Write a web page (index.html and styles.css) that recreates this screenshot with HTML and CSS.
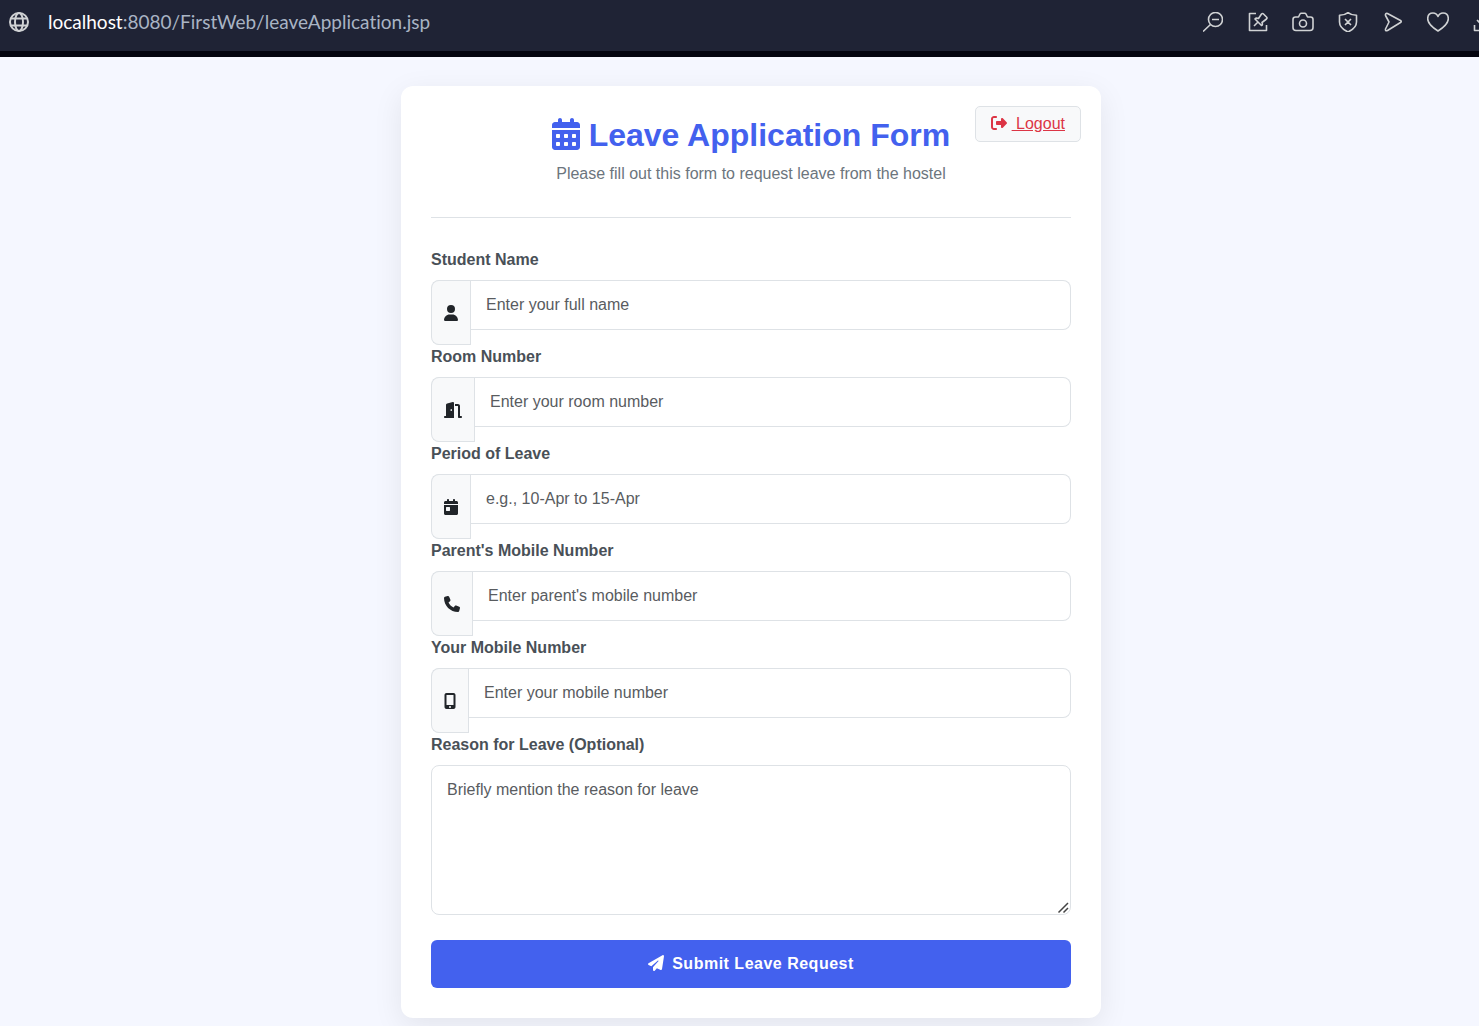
FILE: index.html
```html
<!DOCTYPE html>
<html lang="en">
<head>
<meta charset="utf-8">
<meta name="viewport" content="width=device-width, initial-scale=1">
<title>Leave Application Form</title>
<link rel="stylesheet" href="styles.css">
</head>
<body>
<header class="browser-bar">
  <svg class="tool-icon globe" viewBox="0 0 20 20" aria-hidden="true"><circle cx="10" cy="10" r="9"/><ellipse cx="10" cy="10" rx="4" ry="9"/><path d="M2 6.500h16M2 13.500h16"/></svg>
  <div class="address"><span class="address-host">localhost</span>:8080/FirstWeb/leaveApplication.jsp</div>
  <div class="tools">
    <button class="tool" type="button" aria-label="Zoom out"><svg class="tool-icon" viewBox="0 0 20 20"><circle cx="12.500" cy="7.500" r="7"/><path d="M9 7.500h7M7.500 12.500L0 19.500"/></svg></button>
    <button class="tool" type="button" aria-label="Pin"><svg class="tool-icon" viewBox="0 0 20 20"><path d="M8 1.500H1.500v17h17V13M6 14l4-4M7 7l6.500 6.500q1.500-.5.500-3l4.500-3.500q1-1 0-2l-3-3q-1-1-2 0L10.500 6.500Q8 5.500 7 7z"/></svg></button>
    <button class="tool" type="button" aria-label="Snapshot"><svg class="tool-icon wide" viewBox="0 0 22 20"><path d="M3.500 5h3l1.500-3q.4-.8 1.300-.8h3.400q.9 0 1.300.8l1.500 3h3q2.500 0 2.500 2.500v8q0 3-3 3H4q-3 0-3-3v-8Q1 5 3.500 5z"/><circle cx="11" cy="11.500" r="3.500"/></svg></button>
    <button class="tool" type="button" aria-label="Ad blocker"><svg class="tool-icon" viewBox="0 0 20 20"><path d="M10 .6Q13.500 3.300 18.500 3.300V10q0 6-8.500 10Q1.500 16 1.500 10V3.300Q6.500 3.300 10 .6zM7 7l6 6M13 7l-6 6"/></svg></button>
    <button class="tool" type="button" aria-label="Send"><svg class="tool-icon" viewBox="0 0 20 20"><path d="M4.500 1.500l13 7q1.500 1 0 2l-13 8q-2.500.8-2-1.500L6 10 2.500 3.500Q2 1 4.500 1.500z"/></svg></button>
    <button class="tool" type="button" aria-label="Favourite"><svg class="tool-icon wide" viewBox="0 0 22 20"><path d="M11 19Q.7 12.500.7 6.800.7 1 6 1q3.500 0 5 3.500Q12.500 1 16 1q5.300 0 5.300 5.800Q21.300 12.500 11 19z"/></svg></button>
    <button class="tool" type="button" aria-label="Downloads"><svg class="tool-icon" viewBox="0 0 20 20"><path d="M1.500 13v5.500h17V13M10 1v12M4 8l6 6 6-6"/></svg></button>
  </div>
</header>

<main class="page">
  <section class="card">
    <a class="logout" href="#logout"><svg class="fa logout-icon" viewBox="0 0 512 512" aria-hidden="true"><path d="M377.900 105.900L500.700 228.700c7.200 7.200 11.300 17.100 11.300 27.300s-4.100 20.100-11.300 27.300L377.900 406.100c-6.400 6.400-15 9.900-24 9.900c-18.700 0-33.900-15.200-33.900-33.900l0-62.100-128 0c-17.700 0-32-14.300-32-32l0-64c0-17.700 14.300-32 32-32l128 0 0-62.100c0-18.700 15.200-33.900 33.900-33.900c9 0 17.600 3.600 24 9.900zM160 96L96 96c-17.700 0-32 14.300-32 32l0 256c0 17.700 14.300 32 32 32l64 0c17.700 0 32 14.300 32 32s-14.300 32-32 32l-64 0c-53 0-96-43-96-96L0 128C0 75 43 32 96 32l64 0c17.700 0 32 14.300 32 32s-14.300 32-32 32z"/></svg> Logout</a>

    <div class="form-header">
      <h1 class="title"><svg class="fa" viewBox="0 0 448 512" aria-hidden="true"><path d="M128 0c17.700 0 32 14.300 32 32V64H288V32c0-17.700 14.300-32 32-32s32 14.300 32 32V64h48c26.500 0 48 21.500 48 48v48H0V112C0 85.500 21.500 64 48 64H96V32c0-17.700 14.300-32 32-32zM0 192H448V464c0 26.500-21.500 48-48 48H48c-26.500 0-48-21.500-48-48V192zm64 80v32c0 8.800 7.200 16 16 16h32c8.800 0 16-7.200 16-16V272c0-8.800-7.200-16-16-16H80c-8.800 0-16 7.200-16 16zm128 0v32c0 8.800 7.200 16 16 16h32c8.800 0 16-7.200 16-16V272c0-8.800-7.200-16-16-16H208c-8.800 0-16 7.200-16 16zm144-16c-8.800 0-16 7.200-16 16v32c0 8.800 7.200 16 16 16h32c8.800 0 16-7.200 16-16V272c0-8.800-7.200-16-16-16H336zM64 400v32c0 8.800 7.200 16 16 16h32c8.800 0 16-7.200 16-16V400c0-8.800-7.200-16-16-16H80c-8.800 0-16 7.200-16 16zm144-16c-8.800 0-16 7.200-16 16v32c0 8.800 7.200 16 16 16h32c8.800 0 16-7.200 16-16V400c0-8.800-7.200-16-16-16H208zm112 16v32c0 8.800 7.200 16 16 16h32c8.800 0 16-7.200 16-16V400c0-8.800-7.200-16-16-16H336c-8.800 0-16 7.200-16 16z"/></svg> Leave Application Form</h1>
      <p class="subtitle">Please fill out this form to request leave from the hostel</p>
    </div>

    <form>
      <label class="label" for="studentName">Student Name</label>
      <div class="input-group">
        <span class="addon"><svg class="fa" viewBox="0 0 448 512" aria-hidden="true"><path d="M224 256A128 128 0 1 0 224 0a128 128 0 1 0 0 256zm-45.700 48C79.800 304 0 383.800 0 482.300C0 498.700 13.300 512 29.700 512H418.300c16.400 0 29.700-13.300 29.700-29.700C448 383.800 368.200 304 269.700 304H178.300z"/></svg></span>
        <input class="control" type="text" id="studentName" placeholder="Enter your full name">
      </div>

      <label class="label" for="roomNumber">Room Number</label>
      <div class="input-group">
        <span class="addon"><svg class="fa" viewBox="0 0 576 512" aria-hidden="true"><path d="M320 32c0-9.900-4.500-19.200-12.300-25.200S289.800-1.400 280.200 1l-179.900 45C79 51.300 64 70.500 64 92.500V448H32c-17.700 0-32 14.300-32 32s14.300 32 32 32H96 288h32V480 32zM256 256c0 17.700-10.700 32-24 32s-24-14.300-24-32s10.700-32 24-32s24 14.300 24 32zm96-128h96V480c0 17.700 14.300 32 32 32h64c17.700 0 32-14.300 32-32s-14.300-32-32-32H512V128c0-35.300-28.700-64-64-64H352v64z"/></svg></span>
        <input class="control" type="text" id="roomNumber" placeholder="Enter your room number">
      </div>

      <label class="label" for="period">Period of Leave</label>
      <div class="input-group">
        <span class="addon"><svg class="fa" viewBox="0 0 448 512" aria-hidden="true"><path d="M128 0c17.700 0 32 14.300 32 32V64H288V32c0-17.700 14.300-32 32-32s32 14.300 32 32V64h48c26.500 0 48 21.500 48 48v48H0V112C0 85.500 21.500 64 48 64H96V32c0-17.700 14.300-32 32-32zM0 192H448V464c0 26.500-21.500 48-48 48H48c-26.500 0-48-21.500-48-48V192zm80 64c-8.800 0-16 7.200-16 16v96c0 8.800 7.200 16 16 16h96c8.800 0 16-7.200 16-16V272c0-8.800-7.200-16-16-16H80z"/></svg></span>
        <input class="control" type="text" id="period" placeholder="e.g., 10-Apr to 15-Apr">
      </div>

      <label class="label" for="parentMobile">Parent's Mobile Number</label>
      <div class="input-group">
        <span class="addon"><svg class="fa" viewBox="0 0 512 512" aria-hidden="true"><path d="M164.900 24.600c-7.700-18.600-28-28.500-47.400-23.200l-88 24C12.100 30.200 0 46 0 64C0 311.400 200.600 512 448 512c18 0 33.800-12.100 38.600-29.500l24-88c5.300-19.400-4.600-39.700-23.200-47.400l-96-40c-16.300-6.800-35.200-2.100-46.300 11.600L304.700 368C234.300 334.700 177.300 277.700 144 207.300L193.300 167c13.700-11.200 18.400-30 11.600-46.300l-40-96z"/></svg></span>
        <input class="control" type="tel" id="parentMobile" placeholder="Enter parent's mobile number">
      </div>

      <label class="label" for="mobile">Your Mobile Number</label>
      <div class="input-group">
        <span class="addon"><svg class="fa" viewBox="0 0 384 512" aria-hidden="true"><path d="M16 64C16 28.700 44.700 0 80 0H304c35.300 0 64 28.700 64 64V448c0 35.300-28.700 64-64 64H80c-35.300 0-64-28.700-64-64V64zM224 448a32 32 0 1 0 -64 0 32 32 0 1 0 64 0zM304 64H80V384H304V64z"/></svg></span>
        <input class="control" type="tel" id="mobile" placeholder="Enter your mobile number">
      </div>

      <label class="label" for="reason">Reason for Leave (Optional)</label>
      <textarea class="control reason" id="reason" rows="5" placeholder="Briefly mention the reason for leave"></textarea>

      <button class="submit" type="submit"><svg class="fa" viewBox="0 0 512 512" aria-hidden="true"><path d="M498.100 5.600c10.100 7 15.400 19.100 13.500 31.200l-64 416c-1.500 9.700-7.400 18.200-16 23s-18.900 5.400-28 1.600L284 427.700l-68.500 74.100c-8.900 9.700-22.900 12.900-35.200 8.100S160 493.200 160 480V396.400c0-4 1.500-7.800 4.200-10.700L331.800 202.800c5.800-6.300 5.600-16-.4-22s-15.700-6.400-22-.7L106 360.800 17.700 316.600C7.100 311.300 .3 300.700 0 288.900s5.900-22.800 16.100-28.700l448-256c10.700-6.100 23.900-5.500 34 1.400z"/></svg>Submit Leave Request</button>
    </form>
  </section>
</main>
</body>
</html>
```

FILE: styles.css
```css
*, *::before, *::after { box-sizing: border-box; }

body {
  margin: 0;
  background: #f5f7ff;
  color: #212529;
  font-family: "Liberation Sans", Arial, sans-serif;
  font-size: 16px;
  line-height: 24px;
}

/* Browser bar */
.browser-bar {
  display: flex;
  align-items: center;
  height: 57px;
  padding: 0 0 8px 9px;
  overflow: hidden;
  background: #1f2335;
  border-bottom: 6px solid #03040f;
}

.tool-icon {
  display: block;
  flex: none;
  width: 20px;
  height: 20px;
  fill: none;
  stroke: #d0d2d4;
  stroke-width: 1.6;
  stroke-linejoin: round;
}

.tool-icon.wide { width: 22px; }
.tool-icon.globe { stroke-width: 2; }

.address {
  margin-left: 19px;
  color: #a9b4c4;
  font-family: "Segoe UI", Lato, sans-serif;
  font-size: 19px;
  font-variant-ligatures: none;
  white-space: nowrap;
}

.address-host { color: #fff; }

.tools {
  display: flex;
  gap: 21px;
  margin: 0 -16px 0 auto;
}

.tool {
  display: grid;
  place-items: center;
  width: 24px;
  height: 24px;
  padding: 0;
  border: 0;
  background: none;
}

/* Page; the form is centred a little right of the window's middle */
.page { padding: 29px 0 8px 23px; }

.card {
  position: relative;
  max-width: 700px;
  margin: 0 auto;
  padding: 30px;
  background: #fff;
  border-radius: 12px;
  box-shadow: 0 8px 30px rgba(0, 0, 0, 0.08);
}

.fa {
  height: 1em;
  fill: currentColor;
  overflow: visible;
  vertical-align: -2px;
}

.logout {
  position: absolute;
  top: 20px;
  right: 20px;
  padding: 5px 15px;
  color: #dc3545;
  background: #f8f9fa;
  border: 1px solid #dee2e6;
  border-radius: 5px;
}

.logout-icon { margin-right: 5px; }

.form-header {
  margin-bottom: 30px;
  padding-bottom: 31px;
  border-bottom: 1px solid #dee2e6;
  text-align: center;
}

.title {
  margin: 0 0 8px;
  color: #4361ee;
  font-size: 32px;
  font-weight: 700;
  line-height: 38px;
}

.title .fa { vertical-align: -4px; }

.subtitle { margin: 0; color: #6c757d; }

.label {
  display: block;
  margin-bottom: 8px;
  color: #495057;
  font-weight: 700;
}

.input-group { display: flex; }

.addon {
  display: flex;
  align-items: center;
  margin-right: 1px;
  padding: 0 12px;
  background: #f8f9fa;
  border: 1px solid #dee2e6;
  border-right: 0;
  border-radius: 8px 0 0 8px;
  box-shadow: 1px 0 #dee2e6;
}

.control {
  display: block;
  width: 100%;
  height: 50px;
  margin: 0 0 15px;
  padding: 12px 15px;
  color: #212529;
  background: #fff;
  border: 1px solid #dee2e6;
  border-radius: 8px;
  font: inherit;
}

.control::placeholder { color: #595c5f; opacity: 1; }

.input-group .control {
  flex: 1;
  min-width: 0;
  border-left: 0;
  border-radius: 0 8px 8px 0;
}

.reason {
  height: 150px;
  margin-bottom: 25px;
  resize: vertical;
}

.reason::-webkit-resizer {
  background: url("data:image/svg+xml,%3Csvg xmlns='http://www.w3.org/2000/svg' width='15' height='15'%3E%3Cpath d='M3.500 13.500l9.500-9.500M8.500 13.500l4.500-4.500' stroke='%23444' stroke-width='1.500'/%3E%3C/svg%3E") no-repeat right bottom;
}

.submit {
  display: block;
  width: 100%;
  padding: 12px;
  color: #fff;
  background: #4361ee;
  border: 0;
  border-radius: 6px;
  font: inherit;
  font-weight: 700;
  letter-spacing: 0.5px;
}

.submit .fa { margin-right: 8px; }
```
